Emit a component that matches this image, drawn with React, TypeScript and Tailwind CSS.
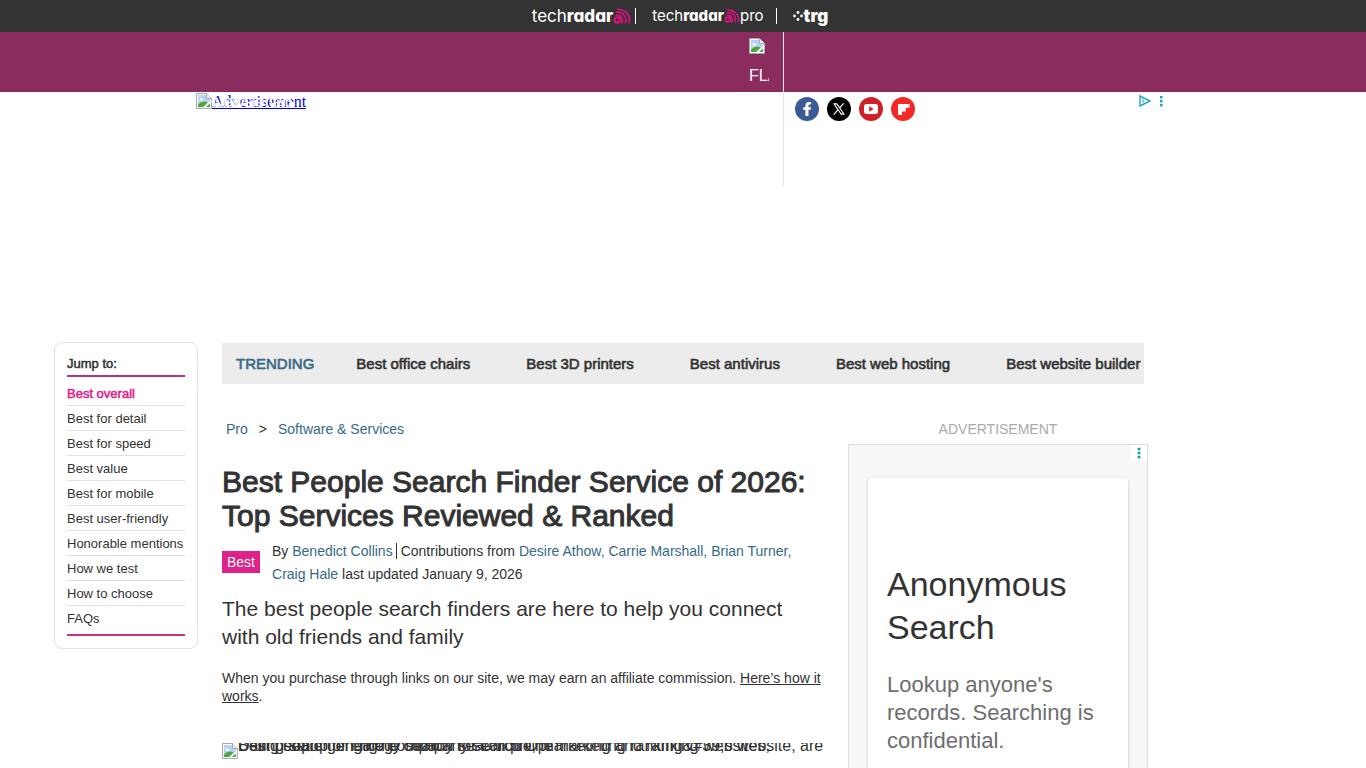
import type { ReactNode } from "react"

const jumpLinks = [
    "Best overall",
    "Best for detail",
    "Best for speed",
    "Best value",
    "Best for mobile",
    "Best user-friendly",
    "Honorable mentions",
    "How we test",
    "How to choose",
    "FAQs",
]

const trending = [
    "Best office chairs",
    "Best 3D printers",
    "Best antivirus",
    "Best web hosting",
    "Best website builder",
]

const contributors = ["Desire Athow", "Carrie Marshall", "Brian Turner", "Craig Hale"]

function Waves({ className }: { className: string }) {
    return (
        <svg viewBox="0 0 18 16" className={className} fill="none" stroke="#d8127d">
            <circle cx="4.2" cy="12" r="2.6" strokeWidth="2.2" />
            <path d="M2.5 7.300c4-.8 6.700 1.700 7 4.700 0 1.500-.4 2.600-1.200 3.600" strokeWidth="1.800" />
            <path d="M3 4.300c5.500-.8 9.600 2.600 10 7.200 0 1.600-.3 2.800-.9 4" strokeWidth="1.800" />
            <path d="M4 1.300c7-.3 12 4 12.600 9.700 0 1.800-.2 3-.7 4.500" strokeWidth="1.800" />
        </svg>
    )
}

function BrokenImage() {
    return (
        <svg viewBox="0 0 16 16" className="block size-4 shrink-0">
            <path d="M.5.5h10l5 5v10H.5z" fill="#fff" stroke="#a3a8b0" />
            <path d="M2 2h8v4h4v8H2z" fill="#b9d2f4" />
            <path d="M3.500 6.500a1.500 1.500 0 0 1 2.800-.6A1.300 1.300 0 0 1 7.500 7.500h-4z" fill="#fff" />
            <path d="M2 14v-2c2-3.500 6.500-4.500 9.500-2.500L7 14z" fill="#4ea834" />
            <path d="M15 7 7 15l1.500.500L15.500 9z" fill="#fff" />
            <path d="M10 14h4v-3.500z" fill="#4ea834" />
            <path d="M10.500.5v5h5" fill="#eef1f5" stroke="#a3a8b0" />
        </svg>
    )
}

function SocialLink({ label, className, children }: { label: string; className: string; children: ReactNode }) {
    return (
        <a href="#" aria-label={label} className={`flex size-6 items-center justify-center rounded-full ${className}`}>
            <svg viewBox="0 0 24 24" className="size-6" fill="#fff">
                {children}
            </svg>
        </a>
    )
}

function TopBar() {
    return (
        <nav className="flex h-8 items-center justify-center bg-[#333] pr-[6px] font-['Inter'] text-white [font-feature-settings:'cv11']">
            <a href="#" className="flex items-center text-[17px] leading-5">
                <span className="font-normal">tech</span>
                <span className="font-extrabold">radar</span>
                <Waves className="h-4 w-[18px]" />
            </a>
            <span className="mr-4 ml-1 h-4 w-px bg-white" />
            <a href="#" className="flex items-center text-[15px] leading-5">
                <span className="font-normal">tech</span>
                <span className="font-extrabold">radar</span>
                <Waves className="h-[14px] w-4" />
                <span className="font-normal">pro</span>
            </a>
            <span className="mr-4 ml-3 h-4 w-px bg-white" />
            <a href="#" className="flex items-center gap-px text-[17px] leading-5 font-black">
                <svg viewBox="0 0 10 10" className="size-[10px]" fill="#fff">
                    <circle cx="5" cy="1.500" r="1.400" />
                    <circle cx="1.500" cy="5" r="1.400" />
                    <circle cx="8.500" cy="5" r="1.400" />
                    <circle cx="5" cy="8.500" r="1.400" />
                </svg>
                trg
            </a>
        </nav>
    )
}

function Masthead() {
    return (
        <header className="relative h-[60px] bg-[#8b2c5e]">
            <div className="absolute top-0 left-1/2 z-10 flex">
                <div className="w-[100px] pt-[6px] pl-[66px] text-white">
                    <BrokenImage />
                    <div className="mt-[10px] w-5 overflow-hidden text-base leading-6">FLAG</div>
                </div>
                <div className="flex h-[154px] gap-2 border-l border-[#e5e5e5] pt-[65px] pl-[11px]">
                    <SocialLink label="Facebook" className="bg-[#3d5a98]">
                        <path d="M13.500 19v-6.300h2.100l.4-2.500h-2.500V8.700c0-.8.3-1.300 1.400-1.300h1.200V5.100C15.600 5 15 5 14.300 5c-2.500 0-3.900 1.200-3.900 3.400v1.800H8.200v2.500h2.200V19z" />
                    </SocialLink>
                    <SocialLink label="X" className="bg-black">
                        <path d="M6.100 6.300h4l2.600 3.600 3.200-3.600h1.500l-4 4.600 4.500 6.800h-4l-2.900-4.200-3.600 4.200H6l4.200-4.900zM8.100 7.400l6.300 9.200h1.500L9.600 7.400z" />
                    </SocialLink>
                    <SocialLink label="YouTube" className="bg-[#cf2027]">
                        <rect x="5" y="7" width="14" height="10" rx="2.500" />
                        <path d="M10.200 9.300v5.400l4.400-2.700z" fill="#cf2027" />
                    </SocialLink>
                    <SocialLink label="Flipboard" className="bg-[#f52828]">
                        <path d="M7 7h11.500v3.700h-3.700v3.700h-3.800V18H7z" />
                    </SocialLink>
                </div>
            </div>
        </header>
    )
}

function Leaderboard() {
    return (
        <div className="mx-auto flex h-[250px] max-w-[974px] items-start justify-between">
            <a href="#" className="relative mt-px flex font-['Liberation_Serif',serif] text-base leading-[18px] text-[#0000ee] underline">
                <BrokenImage />
                Advertisement
                <span className="absolute left-4 font-['Liberation_Sans'] text-white">Newsletters</span>
            </a>
            <div className="mt-[2px] flex gap-[6px] pr-[6px]">
                <svg viewBox="0 0 14 14" className="size-[14px]" fill="none" stroke="#21a9b8" strokeWidth="1.400">
                    <path d="M2 2v10l10-5z" />
                    <path d="M5 5v4" strokeWidth="1" />
                </svg>
                <svg viewBox="0 0 6 14" className="h-[14px] w-[6px]" fill="#21a9b8">
                    <rect x="2" y="2" width="2.500" height="2.500" />
                    <rect x="2" y="6" width="2.500" height="2.500" />
                    <rect x="2" y="10" width="2.500" height="2.500" />
                </svg>
            </div>
        </div>
    )
}

function JumpMenu() {
    return (
        <aside className="w-36 shrink-0 self-start rounded-lg border border-[#e2e2e2] px-3 pb-3 text-[13px]">
            <h2 className="mt-[13px] border-b-2 border-[#b8337a] pb-[3px] leading-4 [-webkit-text-stroke:0.04em]">Jump to:</h2>
            <ul className="mt-1 border-b-2 border-[#d62c82] pb-1">
                {jumpLinks.map((name, i) => (
                    <li
                        key={name}
                        className={
                            i === 0
                                ? "border-b border-[#e2e2e2] text-[#e0218a] [-webkit-text-stroke:0.04em]"
                                : "border-b border-[#e2e2e2] last:border-0"
                        }
                    >
                        <a href="#" className="block pt-[2px] leading-[22px] whitespace-nowrap">{name}</a>
                    </li>
                ))}
            </ul>
        </aside>
    )
}

function Trending() {
    return (
        <nav className="mt-px mr-1 flex h-[41px] items-center overflow-hidden bg-[#ececec] pt-[2px] pl-[14px] text-[15px] whitespace-nowrap [-webkit-text-stroke:0.04em]">
            <span className="mr-[42px] text-[#366a85]">TRENDING</span>
            <ul className="flex gap-14">
                {trending.map((name) => (
                    <li key={name}>
                        <a href="#">{name}</a>
                    </li>
                ))}
            </ul>
        </nav>
    )
}

function SideAd() {
    return (
        <aside className="w-[300px] shrink-0">
            <p className="text-center text-sm leading-5 text-[#aaa]">ADVERTISEMENT</p>
            <div className="relative mt-[5px] border border-[#ddd] bg-[#f7f7f7] px-[19px] pt-[33px] pb-8">
                <button aria-label="Ad options" className="absolute top-0 right-0 flex h-4 w-4 items-center justify-center bg-white">
                    <svg viewBox="0 0 4 12" className="h-3 w-1" fill="#129aa6">
                        <circle cx="2" cy="2" r="1.500" />
                        <circle cx="2" cy="6" r="1.500" />
                        <circle cx="2" cy="10" r="1.500" />
                    </svg>
                </button>
                <div className="rounded-sm bg-white px-[19px] pt-[85px] pb-24 shadow-[0_1px_3px_#bbb]">
                    <h3 className="text-[34px] leading-[43px]">Anonymous Search</h3>
                    <p className="mt-[22px] text-[22px] leading-7 text-[#6e6e6e]">
                        Lookup anyone's
                        <br />
                        records. Searching is confidential.
                    </p>
                </div>
            </div>
        </aside>
    )
}

function Article() {
    return (
        <main className="min-w-0 flex-1">
            <nav className="flex gap-[11px] pl-1 text-sm leading-5 text-[#366a85]">
                <a href="#">Pro</a>
                <span className="text-[#333]">&gt;</span>
                <a href="#">Software &amp; Services</a>
            </nav>
            <h1 className="mt-[26px] text-[30px] leading-[34px] [-webkit-text-stroke:1px]">
                Best People Search Finder Service of 2026:
                <br />
                Top Services Reviewed &amp; Ranked
            </h1>
            <div className="mt-[7px] flex items-start gap-3 text-sm">
                <a href="#" className="mt-[11px] bg-[#e0218a] px-[5px] leading-[22px] text-white">Best</a>
                <p className="max-w-[522px] leading-[23px]">
                    By <a href="#" className="text-[#366a85]">Benedict Collins</a>
                    <span className="mr-1 ml-[3px] border-l border-[#333]" />
                    Contributions from{" "}
                    {contributors.map((name, i) => (
                        <span key={name} className="text-[#366a85]">
                            <a href="#">{name}</a>
                            {i < contributors.length - 1 && ", "}
                        </span>
                    ))}{" "}
                    last updated January 9, 2026
                </p>
            </div>
            <p className="mt-[9px] text-[21px] leading-7">
                The best people search finders are here to help you connect with old friends and family
            </p>
            <p className="mt-[18px] text-sm leading-[18px]">
                When you purchase through links on our site, we may earn an affiliate commission.{" "}
                <a href="#" className="underline">Here’s how it works</a>.
            </p>
            <figure className="mt-[38px] flex">
                <BrokenImage />
                <figcaption className="grid h-3 overflow-hidden text-base leading-[6px] whitespace-nowrap">
                    <span className="col-start-1 row-start-1">Dating setup or engine company search Opt marketing ranking&amp;#39;s website, are</span>
                    <span className="col-start-1 row-start-1">Best people genealogy search for Unique, marketing and ranking websites,</span>
                    <span className="col-start-1 row-start-1">Using search engine company search online</span>
                </figcaption>
            </figure>
        </main>
    )
}

export default function App() {
    return (
        <div className="h-screen overflow-hidden bg-white font-['Liberation_Sans',sans-serif] text-[#333]">
            <TopBar />
            <Masthead />
            <Leaderboard />
            <div className="mx-auto flex max-w-[1258px] gap-6">
                <JumpMenu />
                <div className="max-w-[926px] min-w-0 flex-1">
                    <Trending />
                    <div className="mt-[35px] flex gap-6">
                        <Article />
                        <SideAd />
                    </div>
                </div>
            </div>
        </div>
    )
}
